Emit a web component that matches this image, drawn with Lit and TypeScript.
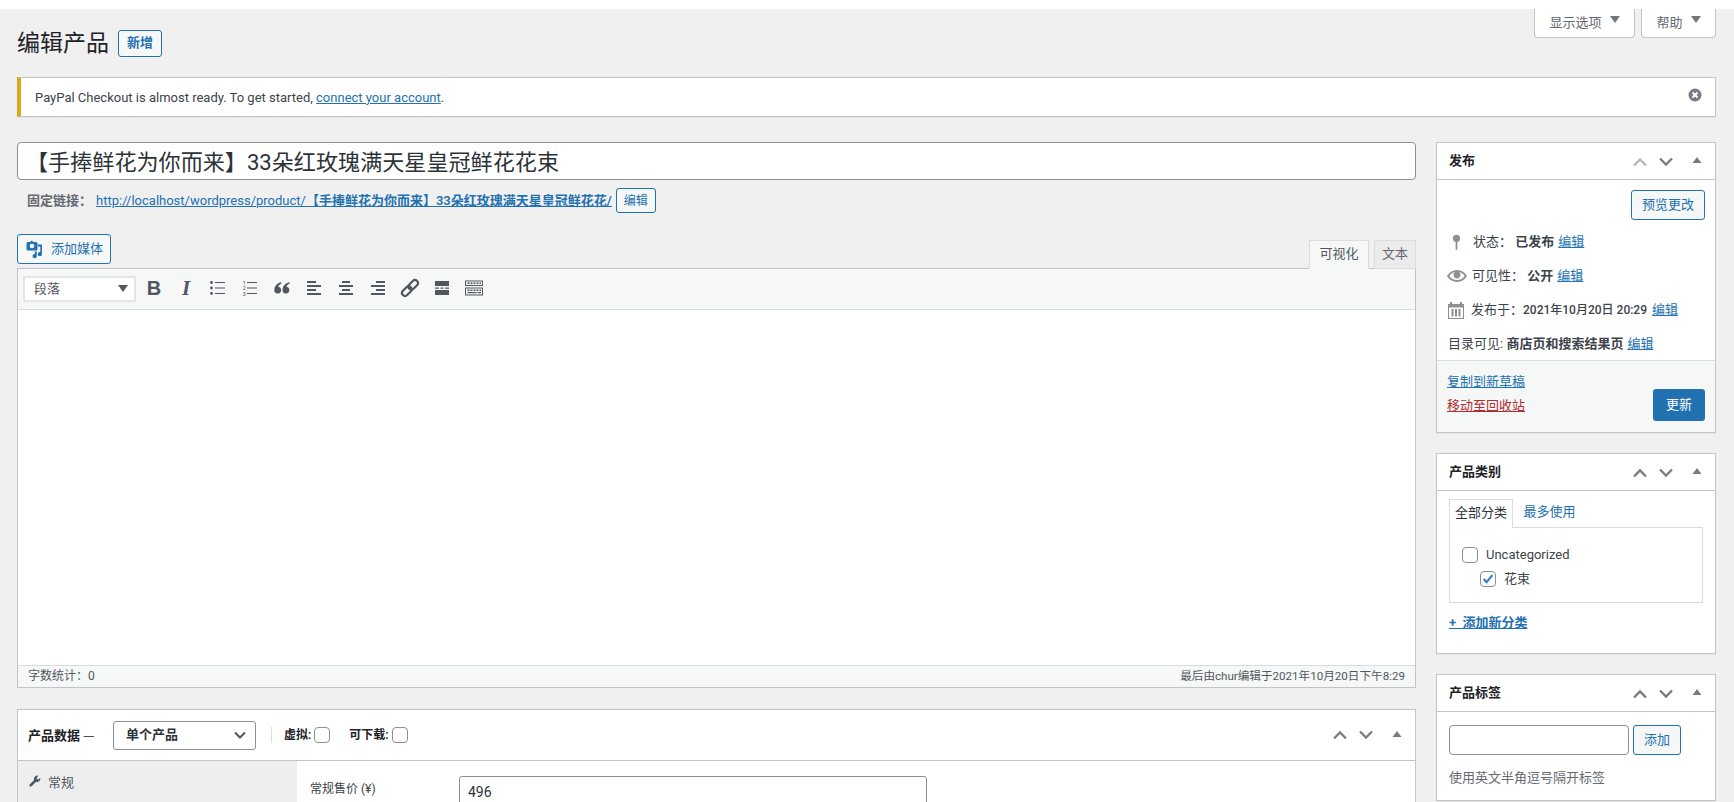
import { LitElement, html, css, svg } from "lit";
import { customElement } from "lit/decorators.js";

const tri = (down: boolean) => html`<svg class="tri" viewBox="0 0 10 8" width="10" height="8"><path d="${down ? "M0 0h10L5 7z" : "M5 0l5 7H0z"}"/></svg>`;
const arrows = (upDisabled = false) => html`<div class="arrows">
  <svg class="chev ${upDisabled ? "dis" : ""}" viewBox="0 0 16 10" width="16" height="10"><path d="M2 8.500L8 2.500l6 6"/></svg>
  <svg class="chev" viewBox="0 0 16 10" width="16" height="10"><path d="M2 1.500L8 7.500l6-6"/></svg>
  <svg class="caret" viewBox="0 0 10 8" width="10" height="8"><path d="M5 1l4.500 6h-9z"/></svg>
</div>`;
const check = (on = false) => html`<span class="cb">${on ? html`<svg viewBox="0 0 16 16" width="14" height="14"><path d="M3 8l3.400 3.600L13 3.600" fill="none" stroke="#3582c4" stroke-width="2.600"/></svg>` : ""}</span>`;

const I = {
  media: svg`<path d="M7 1.500l1.200 1.500H11a1.500 1.500 0 0 1 1.500 1.500V10A1.500 1.500 0 0 1 11 11.500H3A1.500 1.500 0 0 1 1.500 10V4.500A1.500 1.500 0 0 1 3 3h1.700z M7 4.700a2.300 2.300 0 1 0 0 4.600 2.300 2.300 0 0 0 0-4.600z" fill-rule="evenodd"/><path d="M13 5.500h4v9.500a2.100 2.100 0 1 1-1.700-2V7.500H13z M9.500 12.500h2.300v4.500a2.100 2.100 0 1 1-1.700-2z"/>`,
  ul: svg`<g><circle cx="3.500" cy="4.500" r="1.400"/><circle cx="3.500" cy="10" r="1.400"/><circle cx="3.500" cy="15.500" r="1.400"/><rect x="7" y="4" width="10" height="1"/><rect x="7" y="9.500" width="10" height="1"/><rect x="7" y="15" width="10" height="1"/></g>`,
  ol: svg`<g><rect x="7" y="4" width="10" height="1"/><rect x="7" y="9.500" width="10" height="1"/><rect x="7" y="15" width="10" height="1"/><text x="2.500" y="6.500" font-size="6">1</text><text x="2.500" y="12" font-size="6">2</text><text x="2.500" y="17.500" font-size="6">3</text></g>`,
  quote: svg`<path d="M9.300 4C6 5 2.300 7.500 2.300 12a3.400 3.400 0 1 0 4-3.300c.300-1.200 1.400-2.500 3-3.200zM17.500 4c-3.300 1-7 3.500-7 8a3.400 3.400 0 1 0 4-3.300c.300-1.200 1.400-2.500 3-3.200z"/>`,
  left: svg`<path d="M12 5V3H3v2h9zm5 4V7H3v2h14zm-5 4v-2H3v2h9zm5 4v-2H3v2h14z"/>`,
  center: svg`<path d="M14 5V3H6v2h8zm3 4V7H3v2h14zm-3 4v-2H6v2h8zm3 4v-2H3v2h14z"/>`,
  right: svg`<path d="M17 5V3H8v2h9zm0 4V7H3v2h14zm0 4v-2H8v2h9zm0 4v-2H3v2h14z"/>`,
  link: svg`<g transform="rotate(-45 10 10)" fill="none" stroke="currentColor" stroke-width="2.200"><rect x="0" y="7" width="11" height="6" rx="3"/><rect x="9" y="7" width="11" height="6" rx="3"/></g>`,
  more: svg`<path d="M3 3h14v5H3zM3 9.500h4v1.200H3zM8.500 9.500h3v1.200h-3zM13 9.500h4v1.200h-4zM3 12h14v5H3z"/>`,
  kitchen: svg`<path d="M1 2.500h18v5.500H1zM2 3.500V7h16V3.500zM1 9.500h18V17.500H1zM2 10.500V16.500h16V10.500z" fill-rule="evenodd"/><path d="M3.500 4.500h2v1.500h-2zM6.500 4.500h2v1.500h-2zM9.500 4.500h2v1.500h-2zM12.500 4.500h2v1.500h-2zM15.500 4.500h1.500v1.500h-1.500zM3.500 11.500h2V13h-2zM6.500 11.500h2V13h-2zM9.500 11.500h2V13h-2zM12.500 11.500h2V13h-2zM15.500 11.500h1.500V13h-1.500zM3.500 14h9v1.300h-9zM13.500 14H17v1.300h-3.500z"/>`,
};
const ed = (p: unknown) => html`<span class="ico"><svg viewBox="0 0 20 20" width="20" height="20">${p}</svg></span>`;

@customElement("app-root")
export class AppRoot extends LitElement {
  static styles = css`
    :host { display: block; width: 1734px; height: 802px; overflow: hidden; background: #f0f0f1; color: #3c434a;
      font: 13px/1.4 Roboto, "Noto Sans CJK SC", sans-serif; }
    * { box-sizing: border-box; }
    a { color: #2271b1; text-decoration: underline; }
    b { font-weight: 600; }
    .strip { height: 9px; background: #fff; }
    .wrap { padding: 0 18px 0 17px; }
    .head { height: 68px; display: flex; justify-content: space-between; align-items: flex-start; }
    .title { display: flex; align-items: center; gap: 9px; padding-top: 21px; }
    h1 { margin: 0; font-size: 23px; font-weight: 400; line-height: 27px; color: #1d2327; }
    .btn { display: inline-flex; align-items: center; justify-content: center; border: 1px solid #2271b1; border-radius: 3px; color: #2271b1; background: #f6f7f7; font-size: 13px; white-space: nowrap; }
    .new { width: 44px; height: 27px; font-weight: 600; }
    .meta { display: flex; gap: 6px; }
    .meta div { height: 29px; background: #fff; border: 1px solid #c3c4c7; border-top: 0; border-radius: 0 0 4px 4px; color: #646970; display: flex; align-items: center; justify-content: center; gap: 8px; }
    .meta .a { width: 101px; } .meta .b { width: 75px; }
    .tri { fill: #72777c; margin-bottom: 6px; }
    .notice { height: 40px; background: #fff; border: 1px solid #c3c4c7; border-left: 4px solid #dba617; display: flex; justify-content: space-between; align-items: center; padding: 0 13px 0 14px; margin-bottom: 25px; box-shadow: 0 1px 1px rgba(0,0,0,.04); }
    .notice span { padding-top: 2px; }
    .notice svg { margin-bottom: 4px; }
    .cols { display: flex; gap: 20px; align-items: flex-start; }
    .main { width: 1399px; flex: none; }
    .side { width: 280px; flex: none; display: flex; flex-direction: column; gap: 20px; }
    .ttl { height: 38px; background: #fff; border: 1px solid #8c8f94; border-radius: 4px; font-size: 22.100px; line-height: 39px; padding-left: 8px; color: #2c3338; }
    .perma { height: 25px; margin-top: 8px; display: flex; align-items: center; padding-left: 10px; color: #646970; white-space: nowrap; }
    .perma > b, .perma > a { padding-top: 1px; }
    .perma > b { margin-right: 4px; }
    .perma a b { margin: 0; }
    .perma .btn { width: 40px; height: 25px; margin-left: 4px; font-size: 12px; padding-top: 1px; }
    .bar { margin-top: 21px; display: flex; justify-content: space-between; align-items: flex-end; height: 34px; }
    .addm { width: 94px; height: 30px; margin-bottom: 4px; gap: 6px; }
    .addm svg { fill: #2271b1; }
    .tabs { display: flex; gap: 5px; }
    .tabs div { height: 29px; padding-bottom: 1px; border: 1px solid #dcdcde; background: #ebebec; color: #646970; display: flex; align-items: center; justify-content: center; margin-bottom: -1px; position: relative; }
    .tabs .v { width: 60px; background: #f6f7f7; border-bottom-color: #f6f7f7; color: #50575e; }
    .tabs .t { width: 42px; }
    .editor { border: 1px solid #c3c4c7; background: #fff; }
    .tb { height: 41px; background: #f6f7f7; border-bottom: 1px solid #dcdcde; display: flex; align-items: center; padding-left: 5px; padding-bottom: 3px; }
    .fmt { width: 113px; height: 26px; background: #fff; border: 2px solid #e4e5e6; display: flex; align-items: center; justify-content: space-between; padding: 0 6px 0 9px; color: #50575e; margin: 3px 2px 0 0; }
    .fmt .tri { margin: 0; fill: #50575e; }
    .ico { width: 32px; display: flex; justify-content: center; color: #50575e; }
    .ico svg { fill: currentColor; }
    .glyph { width: 32px; text-align: center; font: 700 20px/20px "Liberation Sans", sans-serif; color: #50575e; }
    .glyph.i { font: italic 700 21px/20px "Liberation Serif", serif; }
    .body { height: 355px; }
    .status { height: 22px; background: #f6f7f7; border-top: 1px solid #dcdcde; display: flex; justify-content: space-between; align-items: center; padding: 0 10px; font-size: 12px; color: #50575e; }
    .status span + span { font-size: 11.600px; }
    .pd { margin-top: 21px; background: #fff; border: 1px solid #c3c4c7; }
    .pdh { height: 51px; border-bottom: 1px solid #c3c4c7; display: flex; align-items: center; padding-left: 10px; color: #1d2327; }
    .pdh > b { white-space: nowrap; width: 85px; font-family: "Noto Sans CJK SC", sans-serif; }
    .dash { font-weight: 400; }
    .pick { width: 143px; height: 29px; border: 1px solid #8c8f94; border-radius: 3px; display: flex; align-items: center; justify-content: space-between; padding: 0 9px 0 12px; font-weight: 600; color: #2c3338; }
    .pick svg { fill: none; stroke: #50575e; stroke-width: 2; }
    .sep { width: 1px; height: 16px; background: #dcdcde; margin: 0 12px 0 15px; }
    .lab { display: flex; align-items: center; gap: 3px; margin-right: 19px; font-size: 12px; }
    .cb { width: 16px; height: 16px; flex: none; border: 1px solid #8c8f94; border-radius: 4px; background: #fff; display: inline-flex; align-items: center; justify-content: center; }
    .arrows { margin-left: auto; display: flex; align-items: center; padding-right: 13px; }
    .chev { fill: none; stroke: #787c82; stroke-width: 2.300; margin-right: 10px; }
    .chev.dis { stroke: #b5b8bb; }
    .caret { fill: #787c82; margin-left: 8px; margin-bottom: 3px; }
    .pdb { display: flex; height: 60px; }
    .pdt { width: 279px; background: #eee; display: flex; gap: 7px; padding: 13px 0 0 11px; color: #50575e; }
    .pdt svg { fill: #50575e; margin-top: 1px; }
    .pdf { display: flex; padding: 15px 0 0 13px; color: #3c434a; font-size: 12px; }
    .pdf span { width: 149px; padding-top: 5px; }
    .inp { width: 468px; height: 40px; border: 1px solid #8c8f94; border-radius: 3px; padding: 6px 8px; font-size: 14px; color: #2c3338; background: #fff; }
    .box { background: #fff; border: 1px solid #c3c4c7; box-shadow: 0 1px 1px rgba(0,0,0,.04); }
    .bh { height: 37px; border-bottom: 1px solid #c3c4c7; display: flex; align-items: center; padding: 1px 0 0 12px; color: #1d2327; font-weight: 600; }
    .pub { padding: 10px 10px 0 11px; height: 180px; }
    .pv { display: flex; justify-content: flex-end; }
    .pv .btn { width: 74px; height: 30px; }
    .row { display: flex; align-items: center; height: 20px; white-space: nowrap; color: #3c434a; }
    .row svg { fill: #8c8f94; flex: none; }
    .r1 { margin-top: 12px; } .r2 { margin-top: 14px; } .r3 { margin-top: 14px; } .r4 { margin-top: 14px; }
    .row .lb { margin-left: 7px; }
    .row .eye { margin-left: -1px; }
    .row .eye + .lb { margin-left: 5px; }
    .row b { margin-right: 4px; }
    .row b.date { font-size: 12px; font-weight: 500; margin-right: 5px; }
    .pin { width: 25px; padding-left: 4px; display: flex; }
    .foot { height: 72px; background: #f6f7f7; border-top: 1px solid #dcdcde; display: flex; justify-content: space-between; padding: 11px 10px 0; }
    .foot a { display: block; height: 24px; line-height: 20px; }
    .foot .del { color: #b32d2e; }
    .upd { width: 52px; height: 32px; background: #2271b1; color: #fff; border-radius: 3px; display: flex; align-items: center; justify-content: center; margin-top: 17px; }
    .catb { padding: 8px 12px 0; height: 162px; }
    .ct { display: flex; height: 28px; }
    .ct div { padding-top: 4px; width: 64px; text-align: center; }
    .ct .on { border: 1px solid #dcdcde; border-bottom: 0; background: #fff; margin-bottom: -1px; position: relative; color: #2c3338; }
    .ct .off { color: #2271b1; width: 73px; }
    .cp { height: 76px; border: 1px solid #dcdcde; padding: 19px 0 0 12px; }
    .cl { display: flex; gap: 8px; align-items: center; height: 16px; }
    .cl + .cl { margin: 8px 0 0 18px; }
    .addc { display: block; margin-top: 11px; font-weight: 600; word-spacing: 3px; }
    .tagb { padding: 13px 12px; }
    .tagr { display: flex; gap: 4px; }
    .tagr i { width: 180px; height: 30px; border: 1px solid #8c8f94; border-radius: 4px; display: block; }
    .tagr .btn { width: 48px; height: 30px; }
    .help { margin-top: 14px; color: #646970; }
  `;

  render() {
    return html`
      <div class="strip"></div>
      <div class="wrap">
        <div class="head">
          <div class="title"><h1>编辑产品</h1><span class="btn new">新增</span></div>
          <div class="meta"><div class="a">显示选项 ${tri(true)}</div><div class="b">帮助 ${tri(true)}</div></div>
        </div>
        <div class="notice">
          <span>PayPal Checkout is almost ready. To get started, <a>connect your account</a>.</span>
          <svg viewBox="0 0 14 14" width="14" height="14"><circle cx="7" cy="7" r="6.500" fill="#787c82"/><path d="M4.500 4.500l5 5M9.500 4.500l-5 5" stroke="#fff" stroke-width="2"/></svg>
        </div>
        <div class="cols">
          <div class="main">
            <div class="ttl">【手捧鲜花为你而来】33朵红玫瑰满天星皇冠鲜花花束</div>
            <div class="perma"><b>固定链接：</b><a>http://localhost/wordpress/product/<b>【手捧鲜花为你而来】33朵红玫瑰满天星皇冠鲜花花/</b></a><span class="btn">编辑</span></div>
            <div class="bar">
              <span class="btn addm"><svg viewBox="0 0 20 20" width="20" height="20">${I.media}</svg>添加媒体</span>
              <div class="tabs"><div class="v">可视化</div><div class="t">文本</div></div>
            </div>
            <div class="editor">
              <div class="tb">
                <div class="fmt">段落 ${tri(true)}</div>
                <span class="glyph">B</span><span class="glyph i">I</span>
                ${ed(I.ul)}${ed(I.ol)}${ed(I.quote)}${ed(I.left)}${ed(I.center)}${ed(I.right)}${ed(I.link)}${ed(I.more)}${ed(I.kitchen)}
              </div>
              <div class="body"></div>
              <div class="status"><span>字数统计：0</span><span>最后由chur编辑于2021年10月20日下午8:29</span></div>
            </div>
            <div class="pd">
              <div class="pdh">
                <b>产品数据 <span class="dash">—</span></b>
                <div class="pick">单个产品 <svg viewBox="0 0 12 8" width="12" height="8"><path d="M1 1.500l5 5 5-5"/></svg></div>
                <span class="sep"></span>
                <span class="lab"><b>虚拟:</b>${check()}</span>
                <span class="lab"><b>可下载:</b>${check()}</span>
                ${arrows()}
              </div>
              <div class="pdb">
                <div class="pdt"><svg viewBox="0 0 14 14" width="12" height="12"><path d="M13 3.200L10.700 5.500 8.700 3.500 11 1a3.800 3.800 0 0 0-5 4.700L.8 11a1.500 1.500 0 0 0 2.200 2.200l5.300-5.200A3.800 3.800 0 0 0 13 3.200z"/></svg>常规</div>
                <div class="pdf"><span>常规售价 (¥)</span><div class="inp">496</div></div>
              </div>
            </div>
          </div>
          <div class="side">
            <div class="box">
              <div class="bh">发布 ${arrows(true)}</div>
              <div class="pub">
                <div class="pv"><span class="btn">预览更改</span></div>
                <div class="row r1"><span class="pin"><svg viewBox="0 0 10 18" width="9" height="17"><circle cx="5" cy="4.500" r="4"/><rect x="4" y="6" width="2" height="11"/></svg></span><span>状态：</span>&nbsp;<b>已发布</b><a>编辑</a></div>
                <div class="row r2"><svg class="eye" viewBox="0 0 20 20" width="20" height="20"><path d="M19.700 9.400C17.700 6 14 3.900 10 3.900S2.300 6 .3 9.400L0 10l.3.600c2 3.400 5.700 5.500 9.700 5.500s7.700-2.100 9.700-5.500l.3-.6-.3-.6zM10 14.100c-3.100 0-6-1.600-7.700-4.100C3.600 8 5.700 6.600 8 6.100c-.9.600-1.500 1.700-1.500 2.900 0 1.900 1.600 3.500 3.500 3.500s3.500-1.600 3.500-3.500c0-1.200-.6-2.300-1.500-2.900 2.300.5 4.400 1.900 5.700 3.900-1.700 2.500-4.600 4.100-7.700 4.100z"/></svg><span class="lb">可见性：</span>&nbsp;<b>公开</b><a>编辑</a></div>
                <div class="row r3"><svg viewBox="0 0 16 17" width="16" height="17"><path d="M0 2h2V0h2v2h8V0h2v2h2v15H0zM1 5.500V16h14V5.500zM3.500 7h2v7.500h-2zM7 7h2v7.500H7zM10.500 7h2v7.500h-2z" fill-rule="evenodd"/></svg><span class="lb">发布于：</span><b class="date">2021年10月20日 20:29</b><a>编辑</a></div>
                <div class="row r4">目录可见:&nbsp;<b>商店页和搜索结果页</b><a>编辑</a></div>
              </div>
              <div class="foot"><div><a>复制到新草稿</a><a class="del">移动至回收站</a></div><span class="upd">更新</span></div>
            </div>
            <div class="box">
              <div class="bh">产品类别 ${arrows()}</div>
              <div class="catb">
                <div class="ct"><div class="on">全部分类</div><div class="off">最多使用</div></div>
                <div class="cp">
                  <div class="cl">${check()} Uncategorized</div>
                  <div class="cl">${check(true)} 花束</div>
                </div>
                <a class="addc">+ 添加新分类</a>
              </div>
            </div>
            <div class="box">
              <div class="bh">产品标签 ${arrows()}</div>
              <div class="tagb">
                <div class="tagr"><i></i><span class="btn">添加</span></div>
                <div class="help">使用英文半角逗号隔开标签</div>
              </div>
            </div>
          </div>
        </div>
      </div>
    `;
  }
}
